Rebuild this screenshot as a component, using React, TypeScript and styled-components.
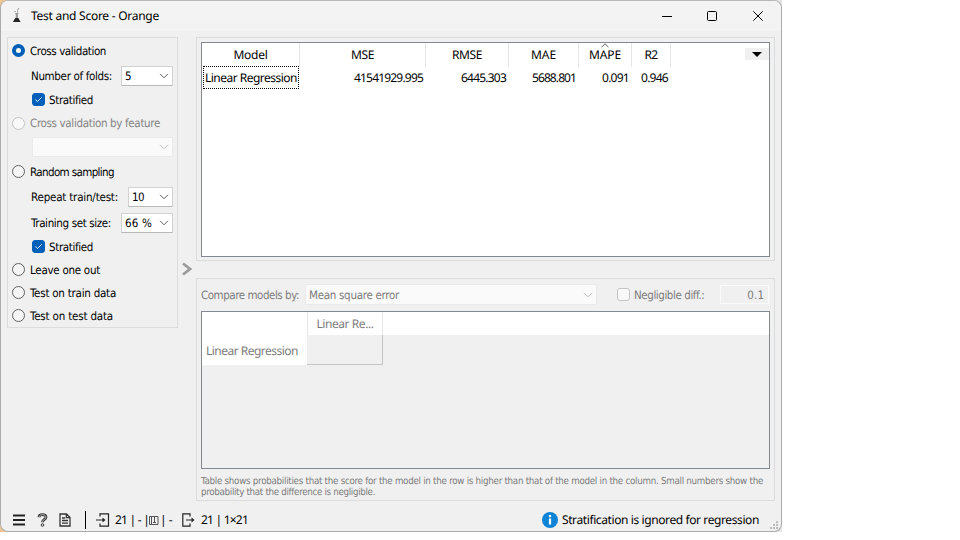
import React, { useLayoutEffect, useRef, useState } from "react";
import styled, { createGlobalStyle, css } from "styled-components";

const GlobalStyle = createGlobalStyle`
  *, *::before, *::after { box-sizing: border-box; }
  body { margin: 0; background: #fff; overflow: hidden; }
  svg { display: block; flex: none; }
`;

const Fitted = styled.span`
  display: inline-block;
  white-space: pre;
`;

const tahoma = css`
  font-family: "DejaVu Sans Condensed", "DejaVu Sans", sans-serif;
  font-stretch: condensed;
  font-size: 11.5px;
`;

const Desktop = styled.div`
  width: 782px;
  height: 532px;
  background: linear-gradient(90deg, #f0c493 0 19px, #c4c4c4 19px 220px, #dcb891 220px 240px, #e4e4e4 240px);
`;

const Window = styled.div`
  width: 782px;
  height: 532px;
  display: flex;
  flex-direction: column;
  border: 1px solid #acacac;
  border-top-color: #b8b8b8;
  border-radius: 8px;
  background: #f0f0f0;
  color: #000;
  font: 12px/16px "Noto Sans", sans-serif;
  text-rendering: geometricPrecision;
  overflow: hidden;
`;

const TitleBar = styled.header`
  height: 30px;
  display: flex;
  align-items: center;
  flex: none;
  padding-left: 10px;
  background: #f3f3f3;
`;

const TitleText = styled.div`
  flex: 1;
  padding-left: 8px;
`;

const CaptionButton = styled.div`
  width: 46px;
  height: 30px;
  display: flex;
  align-items: center;
  justify-content: center;
`;

const Body = styled.main`
  flex: 1;
  display: flex;
  min-height: 0;
  padding: 6px 6px 0 6px;
`;

const Panel = styled.section`
  border: 1px solid #dcdcdc;
`;

const Sampling = styled(Panel)`
  width: 171px;
  height: 291px;
  padding-left: 4px;
  ${tahoma}
`;

const OptionRow = styled.div<{ $h: number; $indent?: number; $disabled?: boolean }>`
  height: ${(p) => p.$h}px;
  display: flex;
  align-items: center;
  gap: ${(p) => (p.$indent ? 4 : 5)}px;
  padding-left: ${(p) => p.$indent ?? 0}px;
  color: ${(p) => (p.$disabled ? "#838383" : "#000")};
`;

const Radio = styled.span<{ $on?: boolean; $disabled?: boolean }>`
  width: 13px;
  height: 13px;
  flex: none;
  border-radius: 50%;
  border: 1px solid ${(p) => (p.$disabled ? "#c4c4c4" : "#626262")};
  background: ${(p) => (p.$disabled ? "#f8f8f8" : "#f5f5f5")};
  ${(p) => p.$on && css`border: 4px solid #005fb8; background: #fff;`}
`;

const CheckBox = styled.span<{ $on?: boolean }>`
  width: 13px;
  height: 13px;
  flex: none;
  display: flex;
  align-items: center;
  justify-content: center;
  border-radius: 3px;
  border: 1px solid ${(p) => (p.$on ? "#005fb8" : "#c4c4c4")};
  background: ${(p) => (p.$on ? "#005fb8" : "#f9f9f9")};
`;

const Combo = styled.div<{ $w: number; $h?: number; $disabled?: boolean }>`
  width: ${(p) => p.$w}px;
  height: ${(p) => p.$h ?? 20}px;
  flex: none;
  display: flex;
  align-items: center;
  justify-content: space-between;
  padding: 0 3px;
  background: ${(p) => (p.$disabled ? "#fafafa" : "#fff")};
  border: 1px solid ${(p) => (p.$disabled ? "#eaeaea" : "#d2d2d2")};
  border-bottom-color: ${(p) => (p.$disabled ? "#eaeaea" : "#b8b8b8")};
  border-radius: 1px;
`;

const FieldRow = styled(OptionRow)`
  justify-content: space-between;
  padding-right: 4px;
`;

const Splitter = styled.div`
  width: 18px;
  height: 463px;
  display: flex;
  align-items: center;
  justify-content: center;
`;

const Results = styled.div`
  width: 579px;
  display: flex;
  flex-direction: column;
  gap: 17px;
`;

const ScorePanel = styled(Panel)`
  height: 224px;
  padding: 4px;
`;

const ScoreTable = styled.div`
  height: 215px;
  display: flex;
  justify-content: space-between;
  border: 1px solid #828790;
  background: #fff;
`;

const ScoreGrid = styled.div`
  display: grid;
  grid-template-columns: 98px 126px 83px 70px 53px 39px;
  grid-template-rows: 24px 22px;
  align-content: start;
`;

const HeadCell = styled.div`
  position: relative;
  display: flex;
  align-items: center;
  justify-content: center;
  border-right: 1px solid #e5e5e5;
`;

const SortMark = styled.svg`
  position: absolute;
  top: 0;
  left: 22px;
`;

const ValueCell = styled.div<{ $focus?: boolean }>`
  display: flex;
  align-items: center;
  justify-content: ${(p) => (p.$focus ? "center" : "flex-end")};
  padding-right: ${(p) => (p.$focus ? 0 : 3)}px;
  ${(p) => p.$focus && css`height: 23px; margin: -1px 1px 0 1px; border: 1px dotted #000;`}
`;

const ColumnMenu = styled.div`
  width: 24px;
  height: 12px;
  margin-top: 5px;
  padding-right: 1px;
  display: flex;
  align-items: center;
  justify-content: center;
  background: #f0f0f0;
`;

const ComparePanel = styled(Panel)`
  height: 223px;
  padding: 4px;
  color: #7c7c7c;
`;

const CompareBar = styled.div`
  height: 28px;
  display: flex;
  align-items: center;
  padding-bottom: 5px;
  ${tahoma}
`;

const NegligibleField = styled.div`
  width: 49px;
  height: 19px;
  display: flex;
  align-items: center;
  justify-content: flex-end;
  margin-left: 16px;
  padding-right: 4px;
  border: 1px solid #fafafa;
`;

const CheckGroup = styled.div`
  display: flex;
  align-items: center;
  gap: 4px;
  margin-left: 20px;
`;

const CompareTable = styled.div`
  height: 158px;
  border: 1px solid #828790;
`;

const CompareHead = styled.div`
  height: 23px;
  display: flex;
  background: #fff;
`;

const CompareHeadCell = styled.div`
  width: 76px;
  margin-left: 105px;
  display: flex;
  align-items: center;
  justify-content: center;
  border-left: 1px solid #e5e5e5;
  border-right: 1px solid #e5e5e5;
`;

const CompareRow = styled.div`
  height: 30px;
  display: flex;
`;

const RowHead = styled.div`
  width: 105px;
  display: flex;
  align-items: center;
  padding: 1px 0 0 4px;
  background: #fff;
`;

const EmptyCell = styled.div`
  width: 76px;
  border: solid #c4c4c4;
  border-width: 0 1px 1px 0;
`;

const Note = styled.div`
  display: flex;
  flex-direction: column;
  align-items: flex-start;
  padding-top: 7px;
  ${tahoma}
  font-size: 9.7px;
  line-height: 11px;
`;

const StatusBar = styled.footer`
  height: 24px;
  flex: none;
  display: flex;
  align-items: center;
  padding: 2px 0 0 11px;
`;

const Spacer = styled.div<{ $w?: number }>`
  ${(p) => (p.$w === undefined ? css`flex: 1;` : css`width: ${p.$w}px; flex: none;`)}
`;

const Divider = styled.div`
  width: 1px;
  height: 18px;
  background: #000;
`;

const GripCorner = styled.div`
  align-self: flex-end;
  padding: 0 3px 2px 0;
`;

/* Text set to an exact advance width by tracking its letters. */
function Txt({ w, children }: { w: number; children: string }) {
  const ref = useRef<HTMLSpanElement>(null);
  const [tracking, setTracking] = useState(0);
  useLayoutEffect(() => {
    const natural = ref.current!.getBoundingClientRect().width;
    setTracking((w - natural) / children.length);
  }, []);
  return <Fitted ref={ref} style={{ letterSpacing: tracking }}>{children}</Fitted>;
}

const Chevron = ({ color = "#606060" }: { color?: string }) => (
  <svg width="10" height="6" viewBox="0 0 10 6" fill="none" stroke={color}>
    <path d="M1 .8 5 4.8 9 .8" />
  </svg>
);

const Tick = () => (
  <svg width="9" height="7" viewBox="0 0 9 7" fill="none" stroke="#fff" strokeWidth=".9">
    <path d="M1.3 3.5 3.5 5.5 7.7 1.3" />
  </svg>
);

const Flask = () => (
  <svg width="12" height="16" viewBox="0 0 12 16">
    <path d="M4.2 5h3.2v1l-.5.4v3.2l2.6 4.4H2l2.8-4.4V6.4L4.2 6z" fill="#9a9a9a" />
    <path d="M4.3 10h3l2.2 4H2z" fill="#252525" />
    <path d="M3.5 3.5h1M6 2h1M7 .8h1M6 4h1" stroke="#777" />
  </svg>
);

const scores = [
  { name: "MSE", hw: 23, value: "41541929.995", vw: 69 },
  { name: "RMSE", hw: 30, value: "6445.303", vw: 45 },
  { name: "MAE", hw: 25, value: "5688.801", vw: 44 },
  { name: "MAPE", hw: 32, value: "0.091", vw: 27 },
  { name: "R2", hw: 13, value: "0.946", vw: 27 },
];

export default function App() {
  return (
    <Desktop>
      <GlobalStyle />
      <Window>
        <TitleBar>
          <Flask />
          <TitleText><Txt w={128}>Test and Score - Orange</Txt></TitleText>
          <CaptionButton>
            <svg width="10" height="10" viewBox="-1 0 10 10" overflow="visible"><path d="M0 5.5h10" stroke="#000" /></svg>
          </CaptionButton>
          <CaptionButton>
            <svg width="10" height="10"><rect x=".5" y=".5" width="9" height="9" rx="1" fill="none" stroke="#000" /></svg>
          </CaptionButton>
          <CaptionButton>
            <svg width="10" height="10"><path d="M.3.3l9.4 9.4M9.7.3.3 9.7" stroke="#000" /></svg>
          </CaptionButton>
        </TitleBar>
        <Body>
          <Sampling>
            <OptionRow $h={25}><Radio $on /><Txt w={76}>Cross validation</Txt></OptionRow>
            <FieldRow $h={25} $indent={19}>
              <Txt w={81}>Number of folds:</Txt>
              <Combo $w={52}><Txt w={6}>5</Txt><Chevron /></Combo>
            </FieldRow>
            <OptionRow $h={23} $indent={20}><CheckBox $on><Tick /></CheckBox><Txt w={44}>Stratified</Txt></OptionRow>
            <OptionRow $h={24} $disabled><Radio $disabled /><Txt w={130}>Cross validation by feature</Txt></OptionRow>
            <FieldRow $h={24} $indent={20}>
              <Combo $w={141} $disabled><span /><Chevron color="#bcbcbc" /></Combo>
            </FieldRow>
            <OptionRow $h={25}><Radio /><Txt w={84}>Random sampling</Txt></OptionRow>
            <FieldRow $h={25} $indent={19}>
              <Txt w={87}>Repeat train/test:</Txt>
              <Combo $w={45}><Txt w={12}>10</Txt><Chevron /></Combo>
            </FieldRow>
            <FieldRow $h={27} $indent={19}>
              <Txt w={80}>Training set size:</Txt>
              <Combo $w={52}><Txt w={27}>66 %</Txt><Chevron /></Combo>
            </FieldRow>
            <OptionRow $h={21} $indent={20}><CheckBox $on><Tick /></CheckBox><Txt w={44}>Stratified</Txt></OptionRow>
            <OptionRow $h={25}><Radio /><Txt w={70}>Leave one out</Txt></OptionRow>
            <OptionRow $h={21}><Radio /><Txt w={86}>Test on train data</Txt></OptionRow>
            <OptionRow $h={25}><Radio /><Txt w={83}>Test on test data</Txt></OptionRow>
          </Sampling>
          <Splitter>
            <svg width="10" height="14" viewBox="0 0 10 14" fill="none" stroke="#9c9c9c" strokeWidth="2.8">
              <path d="M1 1.5 8 7 1 12.5" />
            </svg>
          </Splitter>
          <Results>
            <ScorePanel>
              <ScoreTable>
                <ScoreGrid>
                  <HeadCell><Txt w={34}>Model</Txt></HeadCell>
                  {scores.map((s) => (
                    <HeadCell key={s.name}>
                      {s.name === "MAPE" && (
                        <SortMark width="8" height="5" fill="none" stroke="#606060"><path d="M.5 4.3 4 .8 7.5 4.3" /></SortMark>
                      )}
                      <Txt w={s.hw}>{s.name}</Txt>
                    </HeadCell>
                  ))}
                  <ValueCell $focus><Txt w={92}>Linear Regression</Txt></ValueCell>
                  {scores.map((s) => (
                    <ValueCell key={s.name}><Txt w={s.vw}>{s.value}</Txt></ValueCell>
                  ))}
                </ScoreGrid>
                <ColumnMenu>
                  <svg width="10" height="5"><path d="M0 0h10L5 5z" /></svg>
                </ColumnMenu>
              </ScoreTable>
            </ScorePanel>
            <ComparePanel>
              <CompareBar>
                <Txt w={98}>Compare models by:</Txt>
                <Spacer $w={6} />
                <Combo $w={292} $h={21} $disabled><Txt w={90}>Mean square error</Txt><Chevron color="#bcbcbc" /></Combo>
                <CheckGroup><CheckBox /><Txt w={71}>Negligible diff.:</Txt></CheckGroup>
                <NegligibleField><Txt w={17}>0.1</Txt></NegligibleField>
              </CompareBar>
              <CompareTable>
                <CompareHead><CompareHeadCell><Txt w={57}>Linear Re...</Txt></CompareHeadCell></CompareHead>
                <CompareRow><RowHead><Txt w={92}>Linear Regression</Txt></RowHead><EmptyCell /></CompareRow>
              </CompareTable>
              <Note>
                <Txt w={562}>Table shows probabilities that the score for the model in the row is higher than that of the model in the column. Small numbers show the</Txt>
                <Txt w={174}>probability that the difference is negligible.</Txt>
              </Note>
            </ComparePanel>
          </Results>
        </Body>
        <StatusBar>
          <svg width="14" height="12"><path d="M1 1.5h12M1 6h12M1 10.5h12" stroke="#222" strokeWidth="1.8" /></svg>
          <Spacer $w={11} />
          <svg width="11" height="14" viewBox="0 0 11 14" fill="none">
            <path d="M2 4.3C2 .8 9 .8 9 4.2 9 6.5 5.5 6.5 5.5 9.3" stroke="#333" strokeWidth="2.8" />
            <path d="M2 4.3C2 .8 9 .8 9 4.2 9 6.5 5.5 6.5 5.5 9" stroke="#f0f0f0" strokeWidth=".7" />
            <circle cx="5.5" cy="12" r="1.3" stroke="#333" />
          </svg>
          <Spacer $w={11} />
          <svg width="12" height="14" viewBox="0 0 12 14" fill="none" stroke="#333" strokeWidth="1.3">
            <path d="M1 1h6.5L11 4.5V13H1zM7.3 1v3.7H11M3 5h3M3 7.5h6M3 10.2h6" />
          </svg>
          <Spacer $w={14} />
          <Divider />
          <Spacer $w={10} />
          <svg width="14" height="14" viewBox="0 0 14 14" fill="none" stroke="#222" strokeWidth="1.2">
            <path d="M4 3.5V.8h8.5v12.4H4v-2.7M0 7h8" /><path d="M6.5 4.5 9.5 7l-3 2.5z" fill="#222" stroke="none" />
          </svg>
          <Spacer $w={5} />
          <Txt w={34}>21 | - |</Txt>
          <svg width="10" height="9" viewBox="0 0 10 9" fill="none" stroke="#555">
            <path d="M.5.5h8.5v8H.5zM2.5.5v8M5.5.5v6M4 6.5h3" />
          </svg>
          <Spacer $w={1} />
          <Txt w={12}>| -</Txt>
          <Spacer $w={10} />
          <svg width="13" height="14" viewBox="0 0 13 14" fill="none" stroke="#222" strokeWidth="1.2">
            <path d="M8 3.5V.8H.8v12.4H8v-2.7M4 7h7" /><path d="M9.5 4.5 12.5 7l-3 2.5z" fill="#222" stroke="none" />
          </svg>
          <Spacer $w={6} />
          <Txt w={47}>21 | 1×21</Txt>
          <Spacer />
          <svg width="16" height="16" viewBox="0 0 16 16">
            <circle cx="8" cy="8" r="8" fill="#0f83d6" />
            <path d="M8 3v2.2M8 6.5v6" stroke="#fff" strokeWidth="2.2" />
          </svg>
          <Spacer $w={4} />
          <Txt w={197}>Stratification is ignored for regression</Txt>
          <Spacer $w={11} />
          <GripCorner>
            <svg width="8" height="8" fill="#bcbcbc"><path d="M6 0h2v2H6zM3 3h2v2H3zM6 3h2v2H6zM0 6h2v2H0zM3 6h2v2H3zM6 6h2v2H6z" /></svg>
          </GripCorner>
        </StatusBar>
      </Window>
    </Desktop>
  );
}
